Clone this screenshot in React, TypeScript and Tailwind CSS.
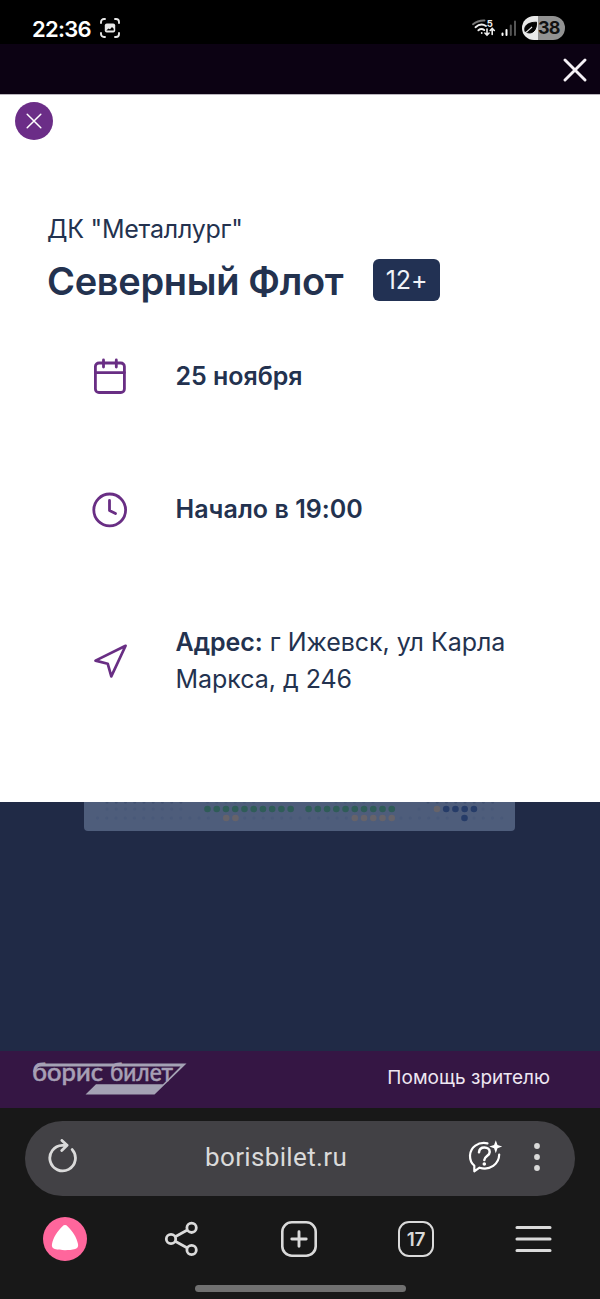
import type { ReactNode } from "react";

const SEAT_STEP = 9.24;
const SEAT_FREE = "#2f5c58";
const SEAT_MID = "#66636a";
const SEAT_VIP = "#263c68";

type Seat = { x: number; y: number; fill: string };

function seatRow(x: number, y: number, count: number, fill: string): Seat[] {
  return Array.from({ length: count }, (_, i) => ({ x: x + i * SEAT_STEP, y, fill }));
}

const seats: Seat[] = [
  ...seatRow(123.5, 7, 10, SEAT_FREE),
  ...seatRow(224.6, 7, 10, SEAT_FREE),
  ...seatRow(353, 7, 1, SEAT_MID),
  ...seatRow(362.2, 7, 4, SEAT_VIP),
  ...seatRow(142.2, 16, 2, SEAT_MID),
  ...seatRow(270.8, 16, 5, SEAT_MID),
  ...seatRow(380.5, 16, 1, SEAT_VIP),
];

const takenSeats: Seat[] = [
  ...seatRow(23, 0, 9, "#3f4f6f"),
  ...seatRow(123.5, 0, 6, "#465576"),
  ...seatRow(252, 0, 5, "#465576"),
  ...seatRow(344, 0, 8, "#3f4f6f"),
  ...seatRow(23, 7, 9, "#495979"),
  ...seatRow(335, 7, 1, "#495979"),
  ...seatRow(399, 7, 2, "#495979"),
  ...seatRow(13.5, 16, 13, "#495979"),
  ...seatRow(160.7, 16, 12, "#495979"),
  ...seatRow(317, 16, 6, "#495979"),
  ...seatRow(390, 16, 4, "#495979"),
];

function StatusBar() {
  return (
    <div className="flex h-11 shrink-0 items-center bg-black pt-3 pr-[35px] pl-8 text-white">
      <span className="w-[59px] pt-px text-[22px] leading-8 font-semibold tracking-[-0.75px] whitespace-nowrap">22:36</span>
      <svg viewBox="0 0 20 20" className="ml-[9px] h-5 w-5" fill="none" stroke="#e8e8e8" strokeWidth="1.9" strokeLinecap="round">
        <path d="M1 5V4a3 3 0 0 1 3-3h1M15 1h1a3 3 0 0 1 3 3v1M19 15v1a3 3 0 0 1-3 3h-1M5 19H4a3 3 0 0 1-3-3v-1" />
        <rect x="4.8" y="5.5" width="10.4" height="9" rx="2" fill="#e8e8e8" stroke="none" />
        <path d="M6.3 12.4l2.2-2 1.5.8 2-2.2 1.7 1.8v1.6z" fill="#000" stroke="none" />
      </svg>
      <div className="ml-auto flex items-center">
        <svg viewBox="0 0 24 18" className="h-[18px] w-6 overflow-visible" fill="none" stroke="#eee" strokeWidth="1.9" strokeLinecap="round">
          <path d="M1 5.2Q6 1.2 12.5 1.5" stroke="#777" />
          <path d="M3.5 8.2Q8.8 3.6 14 7" />
          <path d="M6.4 11.3q3-2.3 5.8-.2" />
          <circle cx="9.7" cy="14" r=".9" fill="#eee" stroke="none" />
          <text x="14.8" y="8.3" fontSize="9.5" fontWeight="700" fill="#eee" stroke="none">5</text>
          <path d="M15 10v6M12.9 14l2.1 2.2 2.1-2.2M20.2 15.5v-6M18.2 11.5l2-2.1 2.1 2.1" strokeWidth="1.6" />
        </svg>
        <svg viewBox="0 0 16 17" className="ml-[5px] h-[17px] w-4" strokeWidth="2" strokeLinecap="round">
          <path d="M1.5 13.5V15M5.5 10v5" stroke="#fff" />
          <path d="M9.8 5.5V15M14 1.5V15" stroke="#555" />
        </svg>
        <div className="ml-[5px] flex h-6 w-[43px] items-center overflow-hidden rounded-full bg-[linear-gradient(90deg,#e9e9e9_0_16px,#929292_16px)]">
          <svg viewBox="0 0 14 14" className="ml-px h-3.5 w-3.5 shrink-0">
            <path d="M2.2 10.8C.4 5.5 3.8 1.3 13.5 1.2c.3 8.3-3.9 12-9.2 10.4z" fill="#050505" stroke="#050505" />
            <path d="M.8 12.8C4 11 6.2 8.7 9 6" fill="none" stroke="#e4e4e4" strokeWidth="1.3" />
          </svg>
          <span className="ml-px text-[18px] leading-6 font-bold tracking-[-0.8px] text-[#111]">38</span>
        </div>
      </div>
    </div>
  );
}

function InfoRow({ icon, children, className }: { icon: ReactNode; children: ReactNode; className: string }) {
  return (
    <div className={`flex items-center pl-[90px] text-[#23324f] ${className}`}>
      <div className="h-10 w-10 shrink-0">{icon}</div>
      <div className="ml-[45.5px] text-[25px] leading-[37px] tracking-[-0.03px] whitespace-nowrap">{children}</div>
    </div>
  );
}

function EventCard() {
  return (
    <section className="h-[708px] shrink-0 border-t border-[#b9b5bc] bg-white">
      <button aria-label="Закрыть" className="mt-[7px] ml-[15px] grid h-[38px] w-[38px] place-items-center rounded-full bg-[#6b2d87]">
        <svg viewBox="0 0 16 16" className="h-4 w-4" stroke="#fff" strokeWidth="1.5" strokeLinecap="round">
          <path d="M1.2 1.2l13.6 13.6M14.8 1.2L1.2 14.8" />
        </svg>
      </button>

      <div className="mt-[71px] pl-[47px] text-[#23324f]">
        <p className="text-[25px] leading-9 font-normal tracking-[-0.25px] whitespace-nowrap">ДК "Металлург"</p>
        <div className="mt-[12px] flex h-[42px] items-center">
          <h1 className="w-[326px] pt-px text-[38px] leading-[42px] font-semibold tracking-[-0.33px] whitespace-nowrap">Северный Флот</h1>
          <span className="grid h-[42px] w-[67px] place-items-center rounded-md bg-[#223153] pt-0.5 text-[25px] tracking-[-0.1px] text-[#f1f3f7]">12+</span>
        </div>
      </div>

      <InfoRow
        className="mt-[55px] h-10"
        icon={
          <svg viewBox="0 0 40 40" className="h-10 w-10" fill="none" stroke="#692e84" strokeWidth="2.8" strokeLinecap="round">
            <rect x="5.4" y="7" width="29" height="29.5" rx="3.6" />
            <path d="M5.4 16.6h29M13.5 4v7M26.3 4v7" />
          </svg>
        }
      >
        <p className="font-semibold">25 ноября</p>
      </InfoRow>

      <InfoRow
        className="mt-[93px] h-10"
        icon={
          <svg viewBox="0 0 40 40" className="h-10 w-10" fill="none" stroke="#692e84" strokeWidth="2.8" strokeLinecap="round" strokeLinejoin="round">
            <circle cx="19.7" cy="20.9" r="15.9" />
            <path d="M19.5 11.5v10l6 3" />
          </svg>
        }
      >
        <p className="font-semibold tracking-[0.05px]">Начало в 19:00</p>
      </InfoRow>

      <InfoRow
        className="mt-[95px] h-[74px]"
        icon={
          <svg viewBox="0 0 40 40" className="h-10 w-10" fill="none" stroke="#692e84" strokeWidth="2.7" strokeLinejoin="round">
            <path d="M35.6 4.8L5.5 19.6l12.2 3.1 3.6 12.7z" />
          </svg>
        }
      >
        <p><b className="font-semibold">Адрес:</b> г Ижевск, ул Карла</p>
        <p>Маркса, д 246</p>
      </InfoRow>
    </section>
  );
}

function SeatMap() {
  return (
    <div className="h-[249px] shrink-0 bg-[#202a46] pl-[84px]">
      <svg viewBox="0 0 431 29" className="h-[29px] w-[431px] rounded-b bg-[#4e5d7b]">
        {takenSeats.map((s, i) => (
          <circle key={i} cx={s.x} cy={s.y} r="1.5" fill={s.fill} />
        ))}
        {seats.map((s, i) => (
          <circle key={i} cx={s.x} cy={s.y} r="3.3" fill={s.fill} />
        ))}
      </svg>
    </div>
  );
}

function SiteFooter() {
  return (
    <footer className="flex h-[57px] shrink-0 items-center justify-between bg-[#351644] pr-[50px] pl-8">
      <svg viewBox="0 0 156 34" className="h-[34px] w-[156px] -translate-y-px overflow-visible">
        <path d="M1.2 10Q2.5 1.6 9 1.6h145.5L122.5 32.6H53.5L64 22.2h67L148.5 4.6H9Q5 4.6 3.2 10z" fill="#a4a2b4" />
        <text x="0" y="19.2" fontFamily="Lato, sans-serif" fontSize="25" fontWeight="500" fill="#a7a0b5" stroke="#a7a0b5" strokeWidth=".5" textLength="71" lengthAdjust="spacingAndGlyphs">борис</text>
        <text x="78" y="19.2" fontFamily="Lato, sans-serif" fontSize="25" fontWeight="500" fill="#a7a0b5" stroke="#a7a0b5" strokeWidth=".5" textLength="63" lengthAdjust="spacingAndGlyphs">билет</text>
      </svg>
      <a className="-translate-y-[2px] text-[19px] leading-6 tracking-[0.03px] whitespace-nowrap text-[#eee6f1]">Помощь зрителю</a>
    </footer>
  );
}

function BrowserBar() {
  return (
    <div className="flex h-[191px] shrink-0 flex-col bg-[#181818] pt-[13px]">
      <div className="mx-[25px] flex h-[75px] shrink-0 items-center rounded-full bg-[#424145] pb-[3px] pl-[22px]">
        <svg viewBox="0 0 32 36" className="h-9 w-8" fill="none" stroke="#dadada" strokeWidth="2.8" strokeLinecap="round" strokeLinejoin="round">
          <path d="M25.2 10.6A12.8 12.8 0 1 1 15.2 6.3h4.6M14.9 1.4l5.2 4.9-5.3 5.2" />
        </svg>
        <span className="ml-[126px] w-[143px] font-[Roboto] text-[26px] leading-8 tracking-[0.35px] whitespace-nowrap text-[#dadada]">borisbilet.ru</span>
        <svg viewBox="0 0 36 36" className="ml-[119px] h-9 w-9" fill="none" stroke="#fff" strokeWidth="2.2" strokeLinecap="round" strokeLinejoin="round">
          <path d="M20.5 4.3C11 2.4 3.4 8.3 3 16.5c-.1 5.5 2 8.4 4.3 10.1v5.7l5.2-3.6C23 32 32 25 32.2 15.5" />
          <path d="M12 13.3c.3-3.3 2.5-4.8 5.4-4.8 3.2 0 5.3 1.8 5.3 4.4 0 4-5.4 4-5.4 8.1" strokeWidth="2.5" />
          <circle cx="17.3" cy="25" r="1.8" fill="#fff" stroke="none" />
          <path d="M28.8 1.2l1.7 4.7 4.7 1.7-4.7 1.7-1.7 4.9-1.7-4.9-4.8-1.7 4.8-1.7z" fill="#fff" stroke="none" />
        </svg>
        <svg viewBox="0 0 8 30" className="ml-[30px] h-[30px] w-2" fill="#dadada">
          <circle cx="4" cy="4" r="2.9" />
          <circle cx="4" cy="15" r="2.9" />
          <circle cx="4" cy="26" r="2.9" />
        </svg>
      </div>

      <nav className="mt-[21px] ml-[6.5px] grid h-11 w-[585px] shrink-0 grid-cols-5 place-items-center">
        <svg viewBox="0 0 44 44" className="h-11 w-11">
          <circle cx="22" cy="22" r="22" fill="#ff669c" />
          <path d="M19.3 9.4c1.8-1.8 3.6-1.8 5.4 0 4.6 4.3 9.2 11.3 10.3 17.5.5 2.7-.4 4.3-2.8 5.1-6 1.6-14.4 1.6-20.4 0-2.4-.8-3.3-2.4-2.8-5.1 1.1-6.2 5.7-13.2 10.3-17.5z" fill="#fff" />
        </svg>
        <svg viewBox="0 0 36 36" className="h-9 w-9" fill="none" stroke="#dadada" strokeWidth="2.8">
          <circle cx="7" cy="18" r="4.7" />
          <circle cx="27.6" cy="6.8" r="4.7" />
          <circle cx="27.6" cy="29" r="4.7" />
          <path d="M11.2 15.7l12.2-6.6M11.2 20.3l12.2 6.6" />
        </svg>
        <svg viewBox="0 0 36 36" className="h-9 w-9" fill="none" stroke="#dadada" strokeWidth="2.6" strokeLinecap="round">
          <rect x="1.3" y="1.3" width="33.4" height="33.4" rx="9.5" />
          <path d="M18 10.8v14.4M10.8 18h14.4" strokeWidth="2.9" />
        </svg>
        <div className="grid h-9 w-9 place-items-center rounded-[11px] border-[2.6px] border-[#dadada] text-[19px] leading-none font-semibold tracking-[-0.2px] text-[#dadada]">17</div>
        <svg viewBox="0 0 37 28" className="h-7 w-[37px]" stroke="#dadada" strokeWidth="3.1" strokeLinecap="round">
          <path d="M2 2.5h33M2 14h33M2 25.5h33" />
        </svg>
      </nav>
      <div className="mx-auto mt-6 h-[7px] w-[211px] rounded-full bg-[#707070]" />
    </div>
  );
}

export default function App() {
  return (
    <main className="flex h-[1299px] w-[600px] flex-col overflow-hidden bg-black font-['Inter',sans-serif]">
      <StatusBar />
      <div className="flex h-[50px] shrink-0 items-center justify-end bg-[#0c0213] pt-px pr-[13px]">
        <svg viewBox="0 0 24 24" className="h-6 w-6" stroke="#f5f1f6" strokeWidth="2.9" strokeLinecap="round">
          <path d="M2 2l20 20M22 2L2 22" />
        </svg>
      </div>
      <EventCard />
      <SeatMap />
      <SiteFooter />
      <BrowserBar />
    </main>
  );
}
